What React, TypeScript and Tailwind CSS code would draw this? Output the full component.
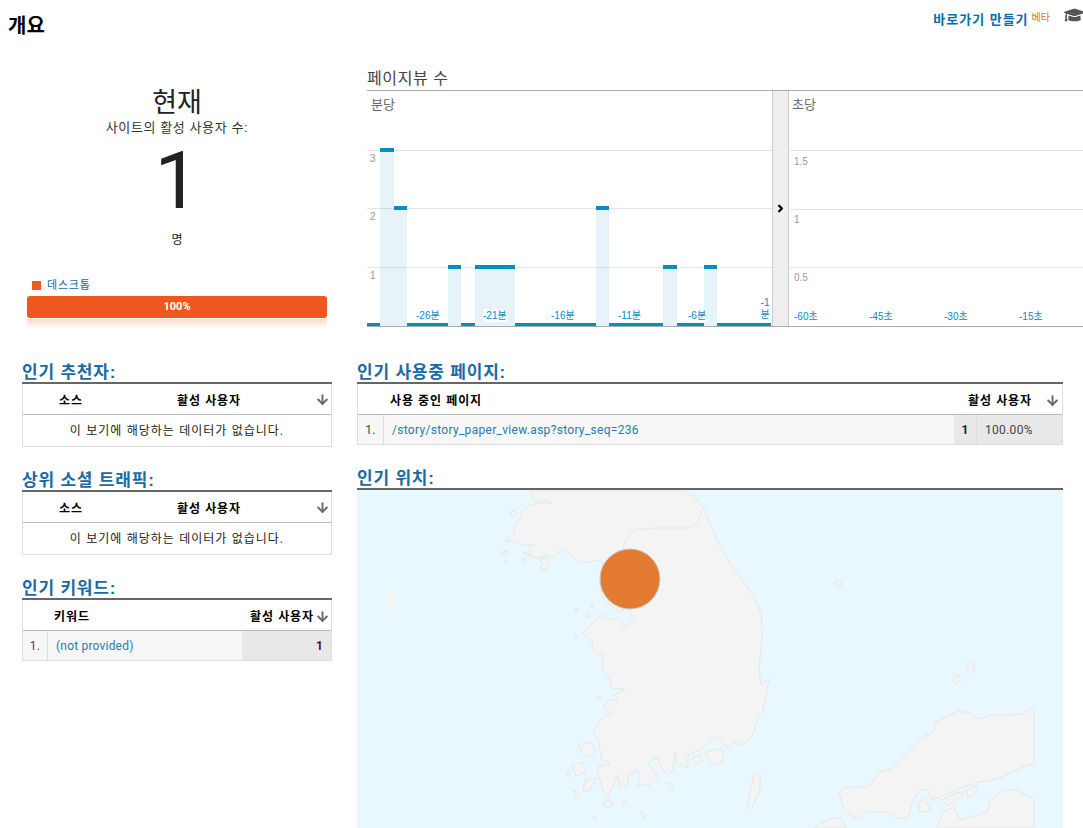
import { ArrowDown, ChevronRight } from "lucide-react";
import { FaGraduationCap } from "react-icons/fa";

const font = "font-['Liberation_Sans','Noto_Sans_CJK_KR',sans-serif]";
const dataFont = "font-['Roboto','Noto_Sans_CJK_KR',sans-serif]";

// 30 one-minute columns, page views per minute
const minutes = [0, 3, 2, 0, 0, 0, 1, 0, 1, 1, 1, 0, 0, 0, 0, 0, 0, 2, 0, 0, 0, 0, 1, 0, 0, 1, 0, 0, 0, 0];
const barHeights = [3, 61, 120, 178];

const minuteLabels = [
  { text: "-26분", left: 49 },
  { text: "-21분", left: 116 },
  { text: "-16분", left: 184 },
  { text: "-11분", left: 251 },
  { text: "-6분", left: 321 },
];
const secondLabels = [
  { text: "-60초", left: 5 },
  { text: "-45초", left: 80 },
  { text: "-30초", left: 155 },
  { text: "-15초", left: 230 },
];

// map outlines, in page pixels
const koreaCoast =
  "530,490 532,495 535,502 545,500 552,503 540,503 530,505 523,510 520,518 515,527 515,533 505,541 517,542 522,545 535,545 528,552 523,553 532,557 540,558 545,555 553,558 558,552 562,549 567,552 573,558 580,562 588,562 598,560 603,562 600,580 602,597 612,606 620,612 627,608 633,617 625,628 618,618 612,620 602,615 593,622 583,633 593,643 592,647 597,655 602,652 603,658 603,670 612,682 610,688 625,689 615,695 618,700 610,700 603,707 612,713 602,718 600,720 593,733 598,740 600,750 602,760 610,763 598,767 598,775 603,790 608,797 618,775 620,788 628,785 628,775 637,770 640,778 637,785 650,785 658,777 650,767 648,762 658,758 660,765 667,775 673,770 675,753 677,763 688,768 688,755 703,748 715,737 728,748 733,742 742,745 752,737 759,715 763,710 769,679 761,684 759,670 762,637 761,613 752,593 728,560 717,540 703,507 698,500 684,490";
const koreaBorder = "703,508 698,522 689,528 654,528 635,530 626,540 623,548";
const honshu =
  "1034,707 1022,714 1007,715 993,715 977,719 970,713 958,711 947,717 935,722 935,730 923,737 910,750 893,768 880,772 868,787 857,787 843,788 839,793 843,808 848,813 857,819 867,812 887,812 897,818 908,818 913,800 920,790 928,790 932,800 940,797 960,788 980,782 993,780 1007,775 1020,768 1034,763";
const shikoku = "1034,800 1017,790 1003,790 990,800 987,812 960,820 953,807 943,812 937,828 1034,828";
const kyushu = "813,828 830,819 841,818 846,828";
const tsushima = "754,775 760,773 760,790 755,800 752,808 748,808 749,795";
const islands = [
  "510,512 515,511 517,515 512,516",
  "502,552 508,551 507,555 503,555",
  "521,560 525,558 524,562",
  "505,561 508,563 506,565",
  "540,560 546,557 550,562 546,570 540,568 543,564",
  "528,553 533,556 530,559",
  "574,610 577,608 578,612",
  "590,606 594,604 593,609",
  "585,615 589,613 590,618",
  "574,637 577,635 576,639",
  "596,698 600,696 600,700",
  "578,745 590,742 596,750 590,757 582,752",
  "572,765 582,762 586,772 576,776",
  "585,780 596,778 590,790 583,792",
  "603,802 610,800 613,806 606,808",
  "622,801 626,800 626,805 622,805",
  "665,782 674,786 672,792",
  "693,758 700,755 702,762 696,764",
  "705,752 722,748 724,760 712,765",
  "566,773 570,772 569,777",
  "573,790 580,795 576,798",
  "640,812 646,815 644,819",
  "593,817 596,817 595,819",
  "838,580 842,583 840,587 836,586 835,582",
  "968,662 973,663 975,670 970,673 966,668",
  "954,676 959,675 961,681 956,684 953,680",
  "942,800 958,792 964,795 948,806",
  "966,790 976,786 978,792 968,797",
  "918,802 926,799 930,811 920,812",
];

function SectionHeading({ title }: { title: string }) {
  return (
    <h3 className="h-[20px] pt-px text-[17px] leading-[20px] font-bold tracking-[0.8px] text-[#1c6aa3]">
      {title}
    </h3>
  );
}

function HeaderArrow() {
  return <ArrowDown className="h-[15px] w-[15px] text-[#666]" strokeWidth={3} />;
}

function EmptyTable({ title }: { title: string }) {
  return (
    <section>
      <SectionHeading title={title} />
      <div className="h-[2px] bg-[#666]" />
      <div className="border-x border-b border-[#ddd]">
        <div className="relative flex h-[31px] items-center border-b border-[#bbb] pt-[3px] text-[12px] font-bold tracking-[0.9px] text-black">
          <span className="w-[96px] text-center">소스</span>
          <span className="w-[180px] text-center">활성 사용자</span>
          <span className="absolute right-[1px] top-[8px]">
            <HeaderArrow />
          </span>
        </div>
        <div className="flex h-[31px] items-center justify-center pt-px text-[12px] tracking-[1px] text-[#222]">
          이 보기에 해당하는 데이터가 없습니다.
        </div>
      </div>
    </section>
  );
}

function MinuteChart() {
  return (
    <div className="relative h-[235px] w-[405px]">
      <span className="absolute left-[4px] top-[4px] text-[13px] text-[#666]">분당</span>
      <div className="absolute inset-x-0 top-[59px] h-px bg-[#e4e4e4]" />
      <div className="absolute inset-x-0 top-[117px] h-px bg-[#e4e4e4]" />
      <div className="absolute inset-x-0 top-[176px] h-px bg-[#e4e4e4]" />
      <span className="absolute left-[3px] top-[60px] text-[10px] text-[#999]">3</span>
      <span className="absolute left-[3px] top-[118px] text-[10px] text-[#999]">2</span>
      <span className="absolute left-[3px] top-[177px] text-[10px] text-[#999]">1</span>
      <div className="absolute inset-y-0 left-0 right-[1px] grid grid-cols-[repeat(30,1fr)] items-end">
        {minutes.map((value, i) => (
          <div
            key={i}
            className={`border-[#058dc7] bg-[#058dc7]/10 ${value === 0 ? "border-t-[3px]" : "border-t-[4px]"}`}
            style={{ height: barHeights[value] }}
          />
        ))}
      </div>
      {minuteLabels.map((label) => (
        <span
          key={label.text}
          className="absolute top-[218px] bg-white/80 text-[10px] leading-[13px] text-[#058dc7]"
          style={{ left: label.left }}
        >
          {label.text}
        </span>
      ))}
      <span className="absolute left-[393px] top-[206px] w-[10px] text-center text-[10px] leading-[12px] text-[#058dc7]">
        -1 분
      </span>
    </div>
  );
}

function SecondChart() {
  return (
    <div className="relative h-[235px] flex-1">
      <span className="absolute left-[3px] top-[4px] text-[13px] text-[#666]">초당</span>
      <div className="absolute inset-x-0 top-[59px] h-px bg-[#e4e4e4]" />
      <div className="absolute inset-x-0 top-[118px] h-px bg-[#e4e4e4]" />
      <div className="absolute inset-x-0 top-[176px] h-px bg-[#e4e4e4]" />
      <span className="absolute left-[5px] top-[63px] text-[10px] text-[#999]">1.5</span>
      <span className="absolute left-[5px] top-[121px] text-[10px] text-[#999]">1</span>
      <span className="absolute left-[5px] top-[179px] text-[10px] text-[#999]">0.5</span>
      {secondLabels.map((label) => (
        <span
          key={label.text}
          className="absolute top-[219px] text-[10px] leading-[13px] text-[#058dc7]"
          style={{ left: label.left }}
        >
          {label.text}
        </span>
      ))}
    </div>
  );
}

function KoreaMap() {
  return (
    <div className="h-[338px] bg-[#e9f7ff]">
      <svg className="h-full w-full" viewBox="357 490 706 338">
        <g fill="#f4f4f4" stroke="#e6e6e6" strokeWidth="1">
          <polygon points={koreaCoast} />
          <polyline points={koreaBorder} fill="none" />
          <polygon points={kyushu} />
          <polygon points={honshu} />
          <polygon points={shikoku} />
          <polygon points={tsushima} />
          {islands.map((points) => (
            <polygon key={points} points={points} />
          ))}
        </g>
        <polygon points="387,590 398,589 393,596 393,607 387,608" fill="#f4f4f4" />
        <polygon points="387,616 391,615 388,625 387,625" fill="#f4f4f4" />
        <circle cx="630" cy="579" r="30" fill="#e37c32" stroke="#c9c9c9" strokeWidth="1" />
      </svg>
    </div>
  );
}

export default function App() {
  return (
    <div className={`${font} relative h-[828px] w-[1083px] overflow-hidden bg-white text-[#222]`}>
      <header className="flex h-[68px] items-start justify-between pl-[8px]">
        <h1 className="pt-[13px] text-[20px] leading-[26px] font-bold text-black">개요</h1>
        <div className="flex items-start">
          <a className="pt-[12px] text-[13px] leading-[16px] font-bold tracking-[1px] text-[#0a6bad]">
            바로가기 만들기
          </a>
          <span className="ml-[3px] pt-[11px] text-[10px] leading-[14px] text-[#e2703a]">베타</span>
          <FaGraduationCap className="mt-[5px] ml-[14px] -mr-[2px] h-[20px] w-[21px] text-[#555]" />
        </div>
      </header>

      <main className="flex">
        <div className="ml-[22px] w-[310px] shrink-0">
          <section className="h-[294px]">
            <div className="pt-[18px] text-center text-[27px] leading-[34px] text-[#222]">현재</div>
            <div className="text-center text-[13px] leading-[16px] tracking-[0.6px] text-[#333]">사이트의 활성 사용자 수:</div>
            <div className="text-center font-['Roboto'] text-[80px] leading-[90px] font-normal text-[#222]">1</div>
            <div className="pt-[6px] text-center text-[12px] leading-[16px] text-[#222]">명</div>
            <div className="mt-[30px] flex items-center pl-[10px]">
              <span className="h-[9px] w-[9px] bg-[#f1591e]" />
              <span className="ml-[6px] text-[11px] leading-[14px] tracking-[0.8px] text-[#0a6bad]">데스크톱</span>
            </div>
            <div className="mx-[5px] mt-[4px]">
              <div className={`${dataFont} flex h-[22px] items-center justify-center rounded-[3px] bg-[#ee581d] text-[11px] font-bold text-white`}>
                100%
              </div>
              <div className="mt-px h-[10px] bg-gradient-to-b from-[#ee581d]/25 to-white" />
            </div>
          </section>

          <div className="flex flex-col gap-[23px]">
            <EmptyTable title="인기 추천자:" />
            <EmptyTable title="상위 소셜 트래픽:" />
            <section>
              <SectionHeading title="인기 키워드:" />
              <div className="h-[2px] bg-[#666]" />
              <div className="border-x border-b border-[#ddd]">
                <div className="flex h-[31px] items-center border-b border-[#bbb] pt-[3px] text-[12px] font-bold tracking-[0.9px] text-black">
                  <span className="ml-[31px] w-[182px]">키워드</span>
                  <span className="ml-auto">활성 사용자</span>
                  <span className="mr-[1px] ml-[1px]">
                    <HeaderArrow />
                  </span>
                </div>
                <div className={`${dataFont} flex h-[29px] items-center bg-[#f7f7f7] text-[12px] tracking-[0.2px]`}>
                  <span className="flex h-full w-[25px] items-center justify-center border-r border-[#ddd] text-[#7b1e4e]">1.</span>
                  <span className="flex-1 pl-[8px] text-[#2a7ba8]">(not provided)</span>
                  <span className="flex h-full w-[89px] items-center justify-end bg-[#e8e8e8] pr-[8px] font-bold text-[#4a1030]">1</span>
                </div>
              </div>
            </section>
          </div>
        </div>

        <div className="ml-[25px] flex-1">
          <section className="ml-[10px] h-[294px]">
            <div className="h-[22px] pt-px text-[16px] leading-[20px] tracking-[0.6px] text-[#444]">페이지뷰 수</div>
            <div className="flex h-[237px] border-y-[1.5px] border-[#aaa]">
              <MinuteChart />
              <div className="flex w-[17px] shrink-0 items-center justify-center border-x border-[#ccc] bg-[#eee]">
                <ChevronRight className="h-[11px] w-[11px] text-black" strokeWidth={5} />
              </div>
              <SecondChart />
            </div>
          </section>

          <div className="flex w-[706px] flex-col gap-[23px]">
            <section>
              <SectionHeading title="인기 사용중 페이지:" />
              <div className="h-[2px] bg-[#666]" />
              <div className="border-x border-b border-[#ddd]">
                <div className="flex h-[31px] items-center border-b border-[#bbb] pt-[3px] text-[12px] font-bold tracking-[0.9px] text-black">
                  <span className="ml-[32px]">사용 중인 페이지</span>
                  <span className="mr-[13px] ml-auto">활성 사용자</span>
                  <span className="mr-[2px]">
                    <HeaderArrow />
                  </span>
                </div>
                <div className={`${dataFont} flex h-[29px] items-center bg-[#f7f7f7] text-[12px] tracking-[0.3px] text-[#444]`}>
                  <span className="flex h-full w-[26px] items-center justify-center border-r border-[#ddd]">1.</span>
                  <span className="flex-1 pl-[8px] text-[#2a7ba8]">/story/story_paper_view.asp?story_seq=236</span>
                  <span className="flex h-full w-[23px] items-center justify-center border-r border-[#ddd] bg-[#e8e8e8] font-bold text-[#222]">1</span>
                  <span className="flex h-full w-[85px] items-center bg-[#e8e8e8] pl-[8px]">100.00%</span>
                </div>
              </div>
            </section>

            <section>
              <SectionHeading title="인기 위치:" />
              <div className="h-[2px] bg-[#666]" />
              <KoreaMap />
            </section>
          </div>
        </div>
      </main>
    </div>
  );
}
